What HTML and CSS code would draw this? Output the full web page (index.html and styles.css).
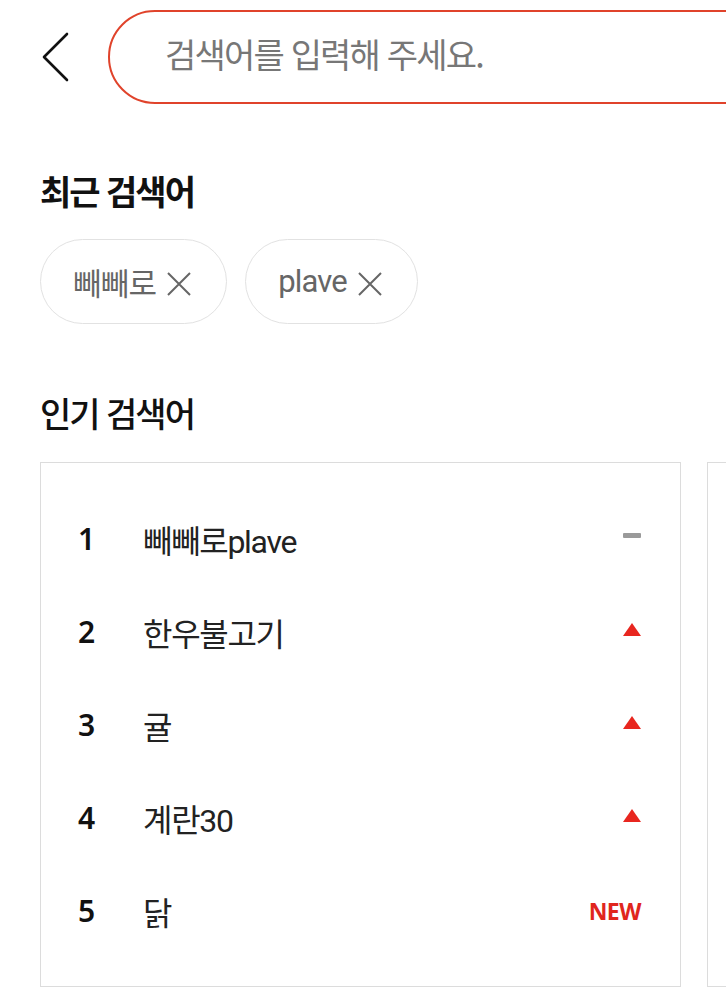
FILE: index.html
```html
<!DOCTYPE html>
<html lang="ko">
<head>
<meta charset="utf-8">
<link rel="stylesheet" href="styles.css">
</head>
<body>
<header class="top">
  <button class="back" aria-label="뒤로">
    <svg width="28" height="50" viewBox="0 0 28 50"><path d="M26 2 L3 25 L26 48" fill="none" stroke="#111" stroke-width="2.6" stroke-linecap="round" stroke-linejoin="round"/></svg>
  </button>
  <div class="search">검색어를 입력해 주세요.</div>
</header>

<section class="recent">
  <h2 class="title bold">최근 검색어</h2>
  <div class="chips">
    <div class="chip">빼빼로 <svg class="x" width="26" height="26" viewBox="0 0 26 26"><path d="M2 2 L24 24 M24 2 L2 24" stroke="#666" stroke-width="2" fill="none"/></svg></div>
    <div class="chip">plave <svg class="x" width="26" height="26" viewBox="0 0 26 26"><path d="M2 2 L24 24 M24 2 L2 24" stroke="#666" stroke-width="2" fill="none"/></svg></div>
  </div>
</section>

<section class="popular">
  <h2 class="title">인기 검색어</h2>
  <div class="cards">
    <ol class="card">
      <li class="row"><span class="rank">1</span><span class="word">빼빼로plave</span><span class="dash"></span></li>
      <li class="row"><span class="rank">2</span><span class="word">한우불고기</span><span class="up"></span></li>
      <li class="row"><span class="rank">3</span><span class="word">귤</span><span class="up"></span></li>
      <li class="row"><span class="rank">4</span><span class="word">계란30</span><span class="up"></span></li>
      <li class="row"><span class="rank">5</span><span class="word">닭</span><span class="new">NEW</span></li>
    </ol>
    <ol class="card"></ol>
  </div>
</section>
</body>
</html>
```

FILE: styles.css
```css
* { box-sizing: border-box; }
html, body { margin: 0; padding: 0; background: #fff; overflow: hidden; }
body {
  font-family: "Noto Sans CJK KR", "Noto Sans", sans-serif;
  color: #111;
  width: 726px;
}
.top {
  display: flex;
  align-items: center;
  padding-top: 10px;
  height: 104px;
}
.back {
  border: 0;
  background: none;
  padding: 0;
  margin-left: 41px;
  width: 28px;
  height: 50px;
  flex: none;
  display: flex;
}
.search {
  flex: none;
  margin-left: 39px;
  width: 700px;
  height: 94px;
  border: 2.5px solid #e0432b;
  border-radius: 48px;
  display: flex;
  align-items: center;
  padding-left: 55px;
  padding-bottom: 8px;
  font-size: 34px;
  color: #777;
  letter-spacing: -1.8px;
}
.title {
  margin: 0;
  padding-left: 40px;
  font-size: 34px;
  font-weight: 500;
  letter-spacing: -2px;
  line-height: 1;
}
.title.bold { font-weight: 700; }
.recent { padding-top: 70px; }
.chips {
  display: flex;
  gap: 18px;
  padding-left: 40px;
  margin-top: 31px;
}
.chip {
  height: 85px;
  border: 1.5px solid #e2e2e2;
  border-radius: 43px;
  display: flex;
  align-items: center;
  gap: 10px;
  padding: 0 34px 0 32px;
  font-family: "Roboto", "Noto Sans CJK KR", sans-serif;
  font-size: 31px;
  color: #666;
  letter-spacing: -0.8px;
}
.chip .x { margin-top: 4px; }
.popular { padding-top: 72px; }
.cards {
  display: flex;
  gap: 26px;
  padding-left: 40px;
  margin-top: 32px;
}
.card {
  flex: none;
  width: 641px;
  height: 525px;
  margin: 0;
  list-style: none;
  border: 1.5px solid #dcdcdc;
  padding: 29px 39px 0 37px;
}
.row {
  display: flex;
  align-items: center;
  height: 93px;
}
.rank {
  width: 65px;
  font-family: "Noto Sans", sans-serif;
  font-weight: 600;
  font-size: 30px;
}
.word {
  flex: 1;
  font-family: "Roboto", "Noto Sans CJK KR", sans-serif;
  font-size: 32px;
  letter-spacing: -1.3px;
  color: #222;
}
.dash {
  width: 18px;
  height: 5px;
  background: #9a9a9a;
  border-radius: 1px;
  margin-bottom: 6px;
}
.up {
  width: 0;
  height: 0;
  border-left: 9px solid transparent;
  border-right: 9px solid transparent;
  border-bottom: 13px solid #e8261f;
  margin-bottom: 4px;
}
.new {
  font-family: "Noto Sans", sans-serif;
  font-weight: 700;
  font-size: 23px;
  color: #e0261e;
  letter-spacing: -0.5px;
}
```
